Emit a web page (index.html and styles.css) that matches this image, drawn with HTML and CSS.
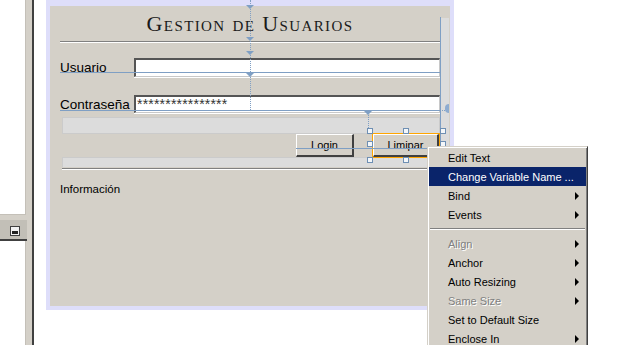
FILE: index.html
```html
<!DOCTYPE html>
<html lang="es">
<head>
    <meta charset="UTF-8">
    <title>Gestion de Usuarios - Diseño</title>
    <link rel="stylesheet" href="styles.css">
</head>
<body>
    <div class="workspace">
        <aside class="side">
            <div class="side-pane"></div>
            <div class="side-bar"><span class="min-btn"></span></div>
            <div class="side-pane side-pane-low"></div>
        </aside>
        <div class="splitter"></div>

        <main class="canvas">
            <div class="frame">
                <div class="form">
                    <h1 class="title">Gestion de Usuarios</h1>

                    <div class="row">
                        <label class="label">Usuario</label>
                        <div class="field"></div>
                    </div>
                    <div class="row row-pass">
                        <label class="label">Contraseña</label>
                        <div class="field field-pass">****************</div>
                    </div>

                    <div class="strip"></div>
                    <div class="buttons">
                        <button class="btn">Login</button>
                        <div class="selected"><button class="btn btn-wide">Limipar</button></div>
                    </div>
                    <div class="strip strip-low"></div>

                    <p class="info">Información</p>

                    <!-- designer guides over the form -->
                    <div class="guides">
                        <span class="side-strip"></span>
                        <span class="vline"></span>
                        <span class="vdot vdot-title"></span>
                        <span class="mark" style="left:196px;top:-1px"></span>
                        <span class="mark" style="left:196px;top:31px"></span>
                        <span class="mark" style="left:196px;top:45px"></span>
                        <span class="mark" style="left:196px;top:67px"></span>
                        <span class="hline hline-user"></span>
                        <span class="hline hline-pass"></span>
                        <span class="hdot"></span>
                        <span class="anchor"></span>
                        <span class="vdot vdot-btn"></span>
                        <span class="mark" style="left:314px;top:105px"></span>
                        <span class="hline hline-btn"></span>
                        <span class="handle" style="left:317px;top:122px"></span>
                        <span class="handle" style="left:353px;top:122px"></span>
                        <span class="handle" style="left:390px;top:122px"></span>
                        <span class="handle" style="left:317px;top:135px"></span>
                        <span class="handle" style="left:390px;top:135px"></span>
                        <span class="handle" style="left:317px;top:151px"></span>
                        <span class="handle" style="left:353px;top:151px"></span>
                    </div>
                </div>
            </div>
        </main>
    </div>

    <div class="menu">
        <div class="item">Edit Text</div>
        <div class="item active">Change Variable Name ...</div>
        <div class="item sub">Bind</div>
        <div class="item sub">Events</div>
        <div class="sep"></div>
        <div class="item sub disabled">Align</div>
        <div class="item sub">Anchor</div>
        <div class="item sub">Auto Resizing</div>
        <div class="item sub disabled">Same Size</div>
        <div class="item">Set to Default Size</div>
        <div class="item sub">Enclose In</div>
    </div>
</body>
</html>
```

FILE: styles.css
```css
body {
    margin: 0;
    width: 643px;
    height: 345px;
    overflow: hidden;
    position: relative;
    background-color: #fff;
    font-family: "Liberation Sans", Arial, sans-serif;
}
.workspace {
    display: flex;
    height: 345px;
}

/* left dock */
.side {
    width: 27px;
    background-color: #d4d0c8;
    display: flex;
    flex-direction: column;
}
.side-pane {
    width: 25px;
    height: 214px;
    background-color: #fff;
    border-right: 1px solid #c4c0b8;
    border-bottom: 1px solid #c4c0b8;
}
.side-pane-low {
    flex: 1;
    border-bottom: none;
}
.side-bar {
    margin-top: 5px;
    height: 19px;
    background-color: #c2bfb7;
    border-bottom: 2px solid #404040;
}
.min-btn {
    display: block;
    position: relative;
    width: 8px;
    height: 8px;
    margin: 6px 0 0 10px;
    background-color: #f2f2f2;
    border: 1px solid #404040;
}
.min-btn::after {
    content: "";
    position: absolute;
    left: 1px;
    top: 4px;
    width: 6px;
    height: 3px;
    background-color: #222;
}
.splitter {
    width: 5px;
    background-color: #d4d0c8;
    border-right: 2px solid #404040;
}

/* design canvas */
.canvas {
    flex: 1;
    padding-left: 12px;
}
.frame {
    width: 400px;
    border: 4px solid #dedefa;
    border-top-width: 6px;
}
.form {
    position: relative;
    height: 300px;
    padding: 0 10px;
    background-color: #d4d0c8;
}
.title {
    margin: 0;
    height: 31px;
    padding-top: 4px;
    line-height: 28px;
    text-align: center;
    font-family: "Liberation Serif", "Times New Roman", serif;
    font-size: 22px;
    font-weight: normal;
    font-variant: small-caps;
    letter-spacing: 1.4px;
    color: #1a1a1a;
    border-bottom: 1px solid #808080;
    box-shadow: 0 1px 0 #fff;
}
.row {
    display: flex;
    margin-top: 16px;
}
.row-pass {
    margin-top: 18px;
}
.label {
    width: 74px;
    line-height: 19px;
    font-size: 13.5px;
    color: #000;
}
.field {
    flex: 1;
    height: 16px;
    background-color: #fff;
    border-top: 2px solid #555;
    border-left: 2px solid #555;
    border-right: 1px solid #c8c8c8;
    border-bottom: 1px solid #c8c8c8;
    box-shadow: 0 1px 0 #fff;
}
.field-pass {
    height: 15px;
    padding-left: 1px;
    font-size: 14px;
    line-height: 14px;
    letter-spacing: 0.2px;
    color: #333;
    overflow: hidden;
}
.strip {
    height: 15px;
    margin: 3px 0 0 2px;
    background-color: #dcdcdc;
    border: 1px solid #cbcbcb;
}
.strip-low {
    height: 9px;
    margin-top: 0;
    border-bottom: none;
    box-shadow: 0 1px 0 #d4d0c8, 0 2px 0 #808080, 0 3px 0 #fff;
}
.buttons {
    display: flex;
    justify-content: flex-end;
    align-items: flex-start;
    gap: 18px;
    height: 23px;
}
.btn {
    width: 58px;
    height: 23px;
    padding: 0;
    font-family: "Liberation Sans", Arial, sans-serif;
    font-size: 11px;
    color: #000;
    background-color: #d4d0c8;
    border-top: 1px solid #fff;
    border-left: 1px solid #fff;
    border-right: 2px solid #404040;
    border-bottom: 2px solid #404040;
}
.selected {
    display: flex;
    margin-top: -1px;
    border: 1px solid #ffa500;
}
.btn-wide {
    width: 66px;
    height: 23px;
}
.info {
    margin: 16px 0 0;
    font-size: 11.5px;
    color: #000;
}

/* guides layer */
.guides {
    position: absolute;
    left: 0;
    top: 0;
    right: 0;
    bottom: 0;
    pointer-events: none;
}
.guides span {
    position: absolute;
    display: block;
}
.side-strip {
    left: 391px;
    top: 12px;
    width: 8px;
    height: 150px;
    background-color: #dcdcdc;
}
.vline {
    left: 390px;
    top: 11px;
    width: 1px;
    height: 150px;
    background-color: #7f9fc4;
}
.vdot {
    width: 0;
    border-left: 1px dotted #7f9fc4;
}
.vdot-title {
    left: 200px;
    top: -6px;
    height: 110px;
}
.vdot-btn {
    left: 318px;
    top: 106px;
    height: 22px;
}
.mark {
    width: 0;
    height: 0;
    border-left: 4px solid transparent;
    border-right: 4px solid transparent;
    border-top: 4px solid #7f9fc4;
}
.hline {
    height: 1px;
    background-color: #7f9fc4;
}
.hline-user {
    left: 10px;
    top: 66px;
    width: 380px;
}
.hline-pass {
    left: 10px;
    top: 104px;
    width: 380px;
}
.hdot {
    left: 390px;
    top: 104px;
    width: 5px;
    border-top: 1px dotted #7f9fc4;
}
.anchor {
    left: 395px;
    top: 98px;
    width: 4px;
    height: 9px;
    border-radius: 5px 0 0 5px;
    background-color: #8eacd0;
}
.hline-btn {
    left: 246px;
    top: 142px;
    width: 144px;
}
.handle {
    width: 4px;
    height: 4px;
    background-color: #f4f7fa;
    border: 1px solid #6e8fb3;
}

/* context menu */
.menu {
    position: absolute;
    left: 427px;
    top: 146px;
    width: 157px;
    padding: 1px;
    background-color: #d4d0c8;
    border-top: 1px solid #d4d0c8;
    border-left: 1px solid #d4d0c8;
    border-right: 1px solid #404040;
    border-bottom: 1px solid #404040;
    box-shadow: inset 1px 1px 0 #fff, inset -1px -1px 0 #808080;
    font-size: 11px;
}
.item {
    display: flex;
    justify-content: space-between;
    align-items: center;
    height: 19px;
    padding: 0 7px 0 19px;
    color: #000;
}
.item.active {
    background-color: #0a246a;
    color: #fff;
}
.sub::after {
    content: "";
    width: 0;
    height: 0;
    border-top: 4px solid transparent;
    border-bottom: 4px solid transparent;
    border-left: 4px solid #000;
}
.disabled {
    color: #808080;
    text-shadow: 1px 1px 0 #fff;
}
.sep {
    height: 1px;
    margin: 4px 1px 5px;
    background-color: #808080;
    box-shadow: 0 1px 0 #fff;
}
```
